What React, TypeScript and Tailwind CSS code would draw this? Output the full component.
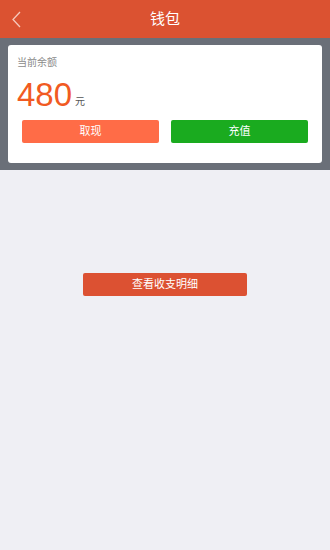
const FONT = { fontFamily: '"Liberation Sans", "Noto Sans CJK SC", sans-serif' };

export default function App() {
  return (
    <div className="flex h-[550px] w-[330px] flex-col bg-[#efeff4]" style={FONT}>
      <header className="relative flex h-[38px] shrink-0 items-center justify-center bg-[#db5231]">
        <svg
          className="absolute left-[11px] top-[11px]"
          width="11"
          height="17"
          viewBox="0 0 11 17"
          fill="none"
          stroke="#f6c9bc"
          strokeWidth="1.3"
        >
          <path d="M9 1 L2 8.5 L9 16" />
        </svg>
        <span className="text-[15px] text-white">钱包</span>
      </header>

      <div className="bg-[#6a6f78] px-2 pb-[7px] pt-[7px]">
        <div className="rounded-[3px] bg-white px-[9px] pb-[20px] pt-[10px]">
          <div className="text-[10px] text-[#8a8a8a]">当前余额</div>
          <div className="mt-[10px] flex items-end">
            <span className="text-[33px] leading-[30px] text-[#f15a22]">480</span>
            <span className="mb-[1px] ml-[3px] text-[10px] text-[#555]">元</span>
          </div>
          <div className="mt-[10px] flex gap-[12px] px-[5px]">
            <button className="h-[23px] flex-1 rounded-[2px] bg-[#ff6c47] text-[11px] text-white">
              取现
            </button>
            <button className="h-[23px] flex-1 rounded-[2px] bg-[#1aab1f] text-[11px] text-white">
              充值
            </button>
          </div>
        </div>
      </div>

      <div className="flex justify-center pt-[103px]">
        <button className="h-[23px] w-[164px] rounded-[2px] bg-[#dc5132] text-[11px] text-white">
          查看收支明细
        </button>
      </div>
    </div>
  );
}
